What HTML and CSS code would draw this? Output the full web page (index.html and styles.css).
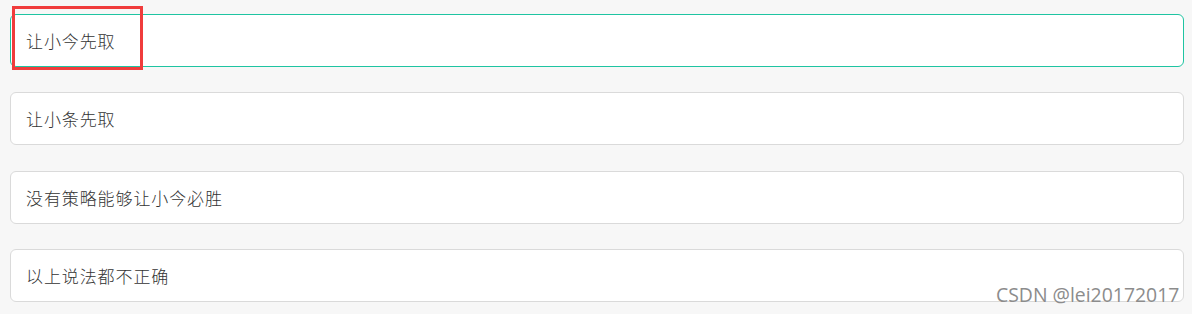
FILE: index.html
```html
<!DOCTYPE html>
<html lang="zh">
<head>
<meta charset="utf-8">
<link rel="stylesheet" href="styles.css">
</head>
<body>
<div class="options">
  <div class="option selected">让小今先取</div>
  <div class="option">让小条先取</div>
  <div class="option">没有策略能够让小今必胜</div>
  <div class="option">以上说法都不正确</div>
</div>
<div class="highlight"></div>
<div class="watermark">CSDN @lei20172017</div>
</body>
</html>
```
FILE: styles.css
```css
html, body {
  margin: 0;
  padding: 0;
  background: #f7f7f7;
  width: 1192px;
  height: 314px;
  overflow: hidden;
  position: relative;
}
.options {
  display: flex;
  flex-direction: column;
  gap: 25px;
  padding: 14px 0 0 10px;
  width: 1174px;
}
.option {
  box-sizing: border-box;
  height: 53px;
  background: #fff;
  border: 1px solid #dadada;
  border-radius: 6px;
  display: flex;
  align-items: center;
  padding-left: 15px;
  font-family: "Noto Sans CJK SC", "Noto Sans", sans-serif;
  font-size: 17px;
  font-weight: 300;
  letter-spacing: 0.9px;
  color: #333;
}
.option:nth-child(3) {
  margin-top: 1px;
}
.option.selected {
  border-color: #1fc4a2;
}
.highlight {
  position: absolute;
  left: 12px;
  top: 6px;
  width: 131px;
  height: 64px;
  box-sizing: border-box;
  border: 3px solid #f03c3c;
}
.watermark {
  position: absolute;
  left: 996px;
  top: 281px;
  font-family: "Open Sans", sans-serif;
  font-size: 19.4px;
  color: #8c8c8c;
  text-shadow: 0 0 1px #fff;
}
```
